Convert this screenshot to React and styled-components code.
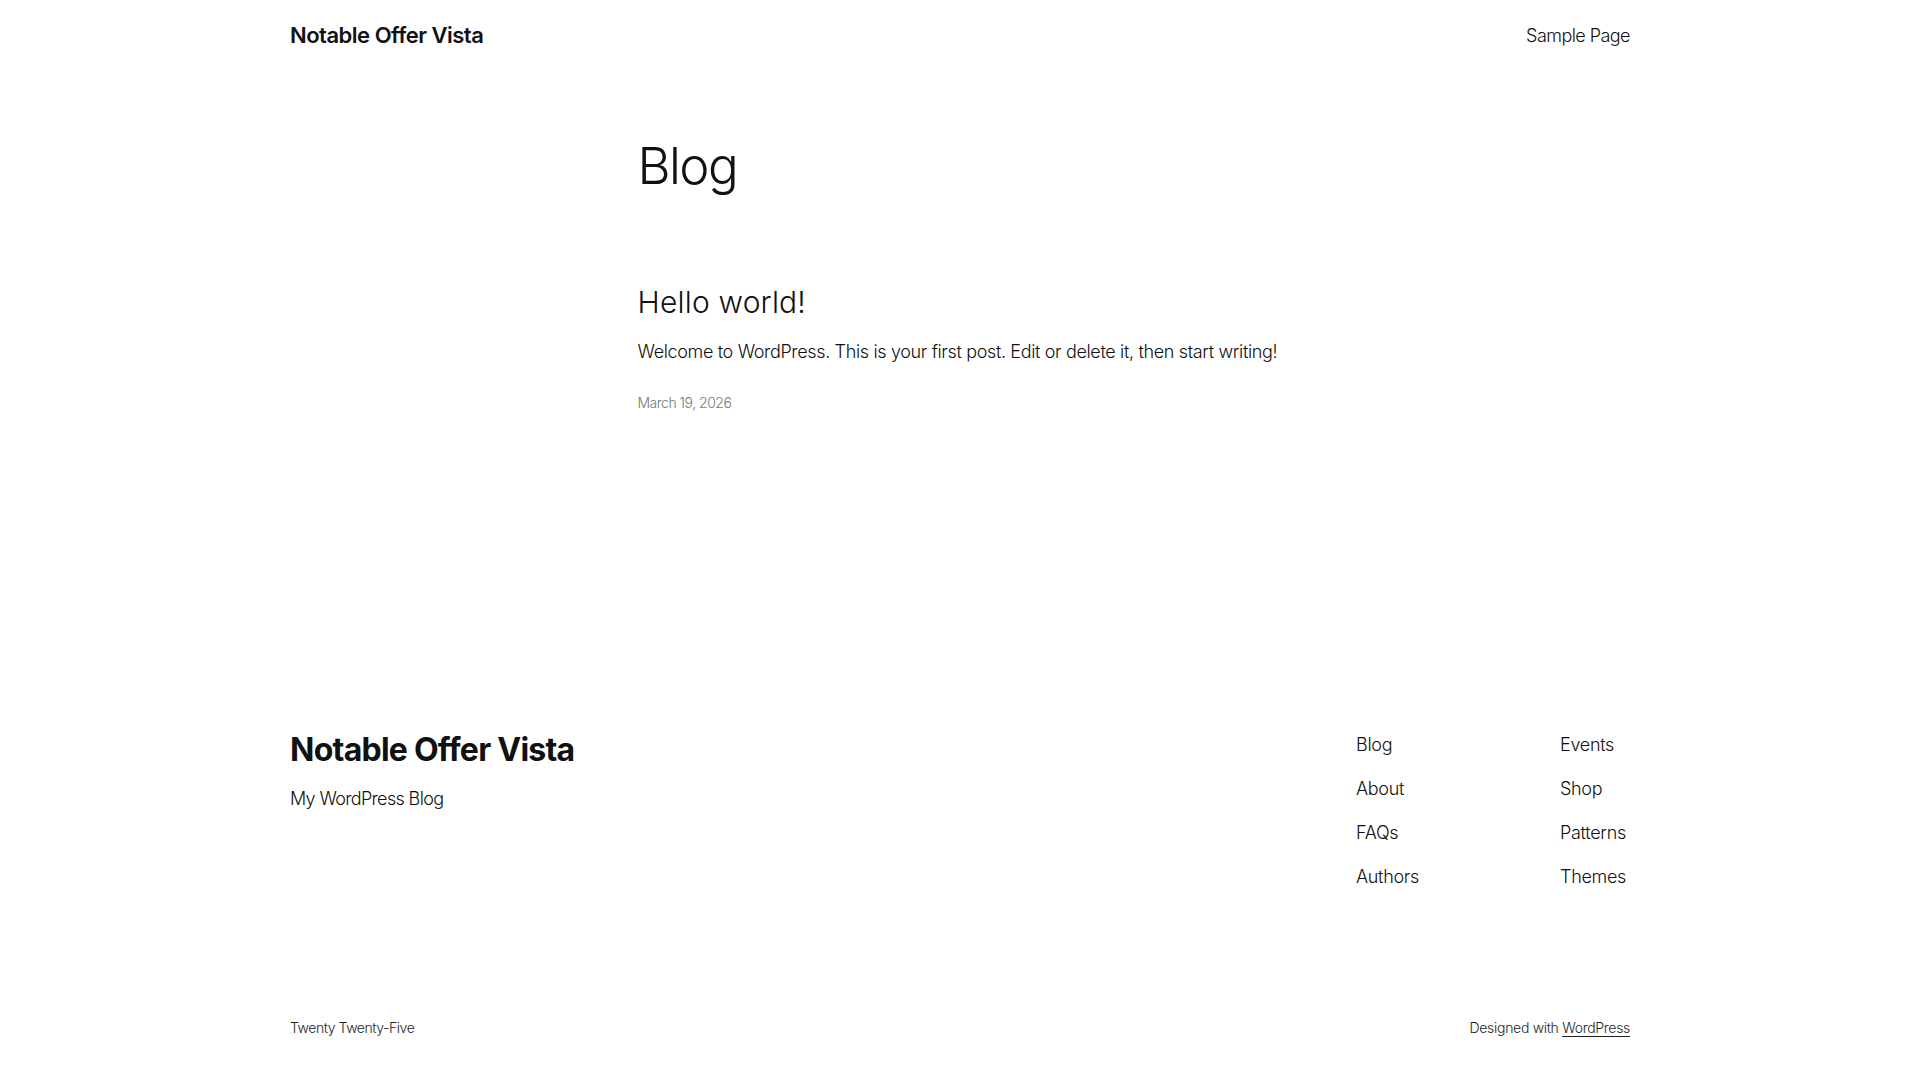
import React from "react";
import styled, { createGlobalStyle } from "styled-components";

const GlobalStyle = createGlobalStyle`
  * { box-sizing: border-box; }
  html, body { margin: 0; padding: 0; background: #fff; }
  body {
    font-family: Inter, "Noto Sans", "Liberation Sans", sans-serif;
    color: #111111;
    -webkit-font-smoothing: antialiased;
  }
  a { color: inherit; text-decoration: none; }
`;

const Page = styled.div`
  min-height: 1080px;
  display: flex;
  flex-direction: column;
`;

const Wide = styled.div`
  width: 1340px;
  margin: 0 auto;
`;

const Header = styled(Wide)`
  display: flex;
  align-items: center;
  justify-content: space-between;
  padding: 20px 0;
`;

const SiteTitle = styled.a`
  font-size: ${(p) => (p.$big ? "32px" : "22px")};
  line-height: ${(p) => (p.$big ? "38px" : "30px")};
  font-weight: ${(p) => (p.$big ? 700 : 600)};
  letter-spacing: ${(p) => (p.$big ? "-0.75px" : "-0.5px")};
`;

const NavLink = styled.a`
  font-size: 18px;
  line-height: 27px;
  font-weight: 300;
  letter-spacing: ${(p) => (p.$tight ? "-0.55px" : "-0.3px")};
`;

const Main = styled.main`
  width: 645px;
  margin: 0 auto;
  padding: 65px 0 317px;
`;

const PageTitle = styled.h1`
  margin: 0;
  font-size: 51px;
  line-height: 61px;
  font-weight: 300;
  letter-spacing: -1.6px;
`;

const Post = styled.article`
  margin-top: 88px;
  display: flex;
  flex-direction: column;
`;

const PostTitle = styled.h2`
  margin: 0;
  font-size: 30px;
  line-height: 36px;
  font-weight: 300;
  letter-spacing: 0.2px;
`;

const Excerpt = styled.p`
  margin: 18px 0 0;
  font-size: 18px;
  line-height: 27px;
  font-weight: 300;
  letter-spacing: -0.35px;
  white-space: nowrap;
`;

const PostDate = styled.time`
  margin-top: 27px;
  font-size: 14px;
  line-height: 22px;
  font-weight: 300;
  letter-spacing: -0.5px;
  color: #777777;
`;

const Footer = styled(Wide)`
  display: flex;
  justify-content: space-between;
  align-items: flex-start;
`;

const Brand = styled.div`
  display: flex;
  flex-direction: column;
  gap: 16px;
`;

const Tagline = styled.p`
  margin: 0;
  font-size: 18px;
  line-height: 27px;
  font-weight: 300;
  letter-spacing: -0.65px;
`;

const FooterNav = styled.nav`
  display: grid;
  grid-template-columns: 204px 70px;
`;

const NavColumn = styled.div`
  display: flex;
  flex-direction: column;
  gap: 17px;
  white-space: nowrap;
`;

const Credits = styled(Wide)`
  display: flex;
  justify-content: space-between;
  margin-top: 128px;
  font-size: 14px;
  line-height: 20px;
  font-weight: 300;
  color: #1e1e1e;
`;

const CreditText = styled.span`
  letter-spacing: ${(p) => (p.$loose ? "-0.3px" : "-0.45px")};
`;

const Underlined = styled.a`
  text-decoration: underline;
  text-underline-offset: 3px;
`;

const leftLinks = ["Blog", "About", "FAQs", "Authors"];
const rightLinks = ["Events", "Shop", "Patterns", "Themes"];

export default function App() {
  return (
    <Page>
      <GlobalStyle />
      <Header as="header">
        <SiteTitle href="#">Notable Offer Vista</SiteTitle>
        <NavLink $tight href="#">Sample Page</NavLink>
      </Header>

      <Main>
        <PageTitle>Blog</PageTitle>
        <Post>
          <PostTitle>Hello world!</PostTitle>
          <Excerpt>
            Welcome to WordPress. This is your first post. Edit or delete it, then start writing!
          </Excerpt>
          <PostDate>March 19, 2026</PostDate>
        </Post>
      </Main>

      <Footer as="footer">
        <Brand>
          <SiteTitle $big href="#">Notable Offer Vista</SiteTitle>
          <Tagline>My WordPress Blog</Tagline>
        </Brand>
        <FooterNav>
          <NavColumn>
            {leftLinks.map((l) => (
              <NavLink key={l} href="#">{l}</NavLink>
            ))}
          </NavColumn>
          <NavColumn>
            {rightLinks.map((l) => (
              <NavLink key={l} href="#">{l}</NavLink>
            ))}
          </NavColumn>
        </FooterNav>
      </Footer>

      <Credits>
        <CreditText>Twenty Twenty-Five</CreditText>
        <CreditText $loose>
          Designed with <Underlined href="#">WordPress</Underlined>
        </CreditText>
      </Credits>
    </Page>
  );
}
